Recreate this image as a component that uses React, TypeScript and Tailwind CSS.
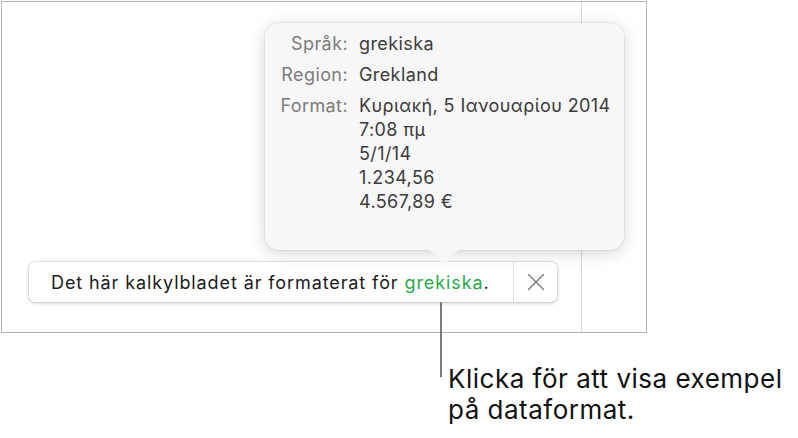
import { X } from 'lucide-react'

const rows = [
  { label: 'Språk:', values: ['grekiska'] },
  { label: 'Region:', values: ['Grekland'] },
  {
    label: 'Format:',
    values: ['Κυριακή, 5 Ιανουαρίου 2014', '7:08 πμ', '5/1/14', '1.234,56', '4.567,89 €'],
  },
]

const FormatPopover = () => (
  <div className="absolute left-[263px] top-[21px] w-[359px] h-[227px] rounded-[14px] bg-[#f7f7f7] shadow-[0_3px_16px_rgba(0,0,0,0.17),0_0_0_1px_rgba(0,0,0,0.05)] z-10">
    <div className="pt-[9px] flex flex-col gap-[7px] text-[18px] leading-[24px] tracking-[0.4px]">
      {rows.map((row) => (
        <div key={row.label} className="flex gap-[11px]">
          <div className="w-[83px] text-right text-[#7c7c7c]">{row.label}</div>
          <div className="flex flex-col text-[#3b3b3b]">
            {row.values.map((v) => (
              <span key={v}>{v}</span>
            ))}
          </div>
        </div>
      ))}
    </div>
    {/* pointer */}
    <svg
      className="absolute left-[155px] top-[226px]"
      width="48"
      height="19"
      viewBox="0 0 48 19"
    >
      <path
        d="M0 0 C 10 0 14 3 18 8 L 22.5 15.5 Q 24 17.5 25.5 15.5 L 30 8 C 34 3 38 0 48 0 Z"
        fill="#f7f7f7"
      />
    </svg>
  </div>
)

const LocaleBanner = () => (
  <div className="ml-[27px] mt-[260px] w-[528px] h-[40px] flex items-stretch rounded-[6px] bg-white shadow-[0_1px_4px_rgba(0,0,0,0.22),0_0_0_1px_rgba(0,0,0,0.06)]">
    <div className="flex-1 flex items-center pl-[22px] text-[18px] tracking-[0.9px] text-[#1a1a1a]">
      Det här kalkylbladet är formaterat för&nbsp;
      <span className="text-[#2aa84a]">grekiska</span>.
    </div>
    <div className="w-[44px] border-l border-[#e2e2e2] flex items-center justify-center">
      <X size={30} strokeWidth={1.1} className="text-[#7a7a7a]" />
    </div>
  </div>
)

export default function App() {
  return (
    <div
      className="relative w-[798px] h-[438px] bg-white overflow-hidden"
      style={{ fontFamily: 'Inter, "Noto Sans", sans-serif' }}
    >
      <div className="pl-px pt-px">
        <div className="relative w-[646px] h-[332px] border border-[#b3b3b3] flex">
          <div className="w-[579px]">
            <LocaleBanner />
          </div>
          <div className="border-l border-[#d9d9d9] flex-1" />
          <FormatPopover />
        </div>
      </div>

      {/* callout */}
      <div className="absolute left-[440px] top-[302px] w-[2px] h-[75px] bg-[#7a7a7a]" />
      <div className="pl-[448px] mt-[30px] text-[26px] leading-[31px] tracking-[0.5px] text-[#111]">
        Klicka för att visa exempel
        <br />
        på dataformat.
      </div>
    </div>
  )
}
